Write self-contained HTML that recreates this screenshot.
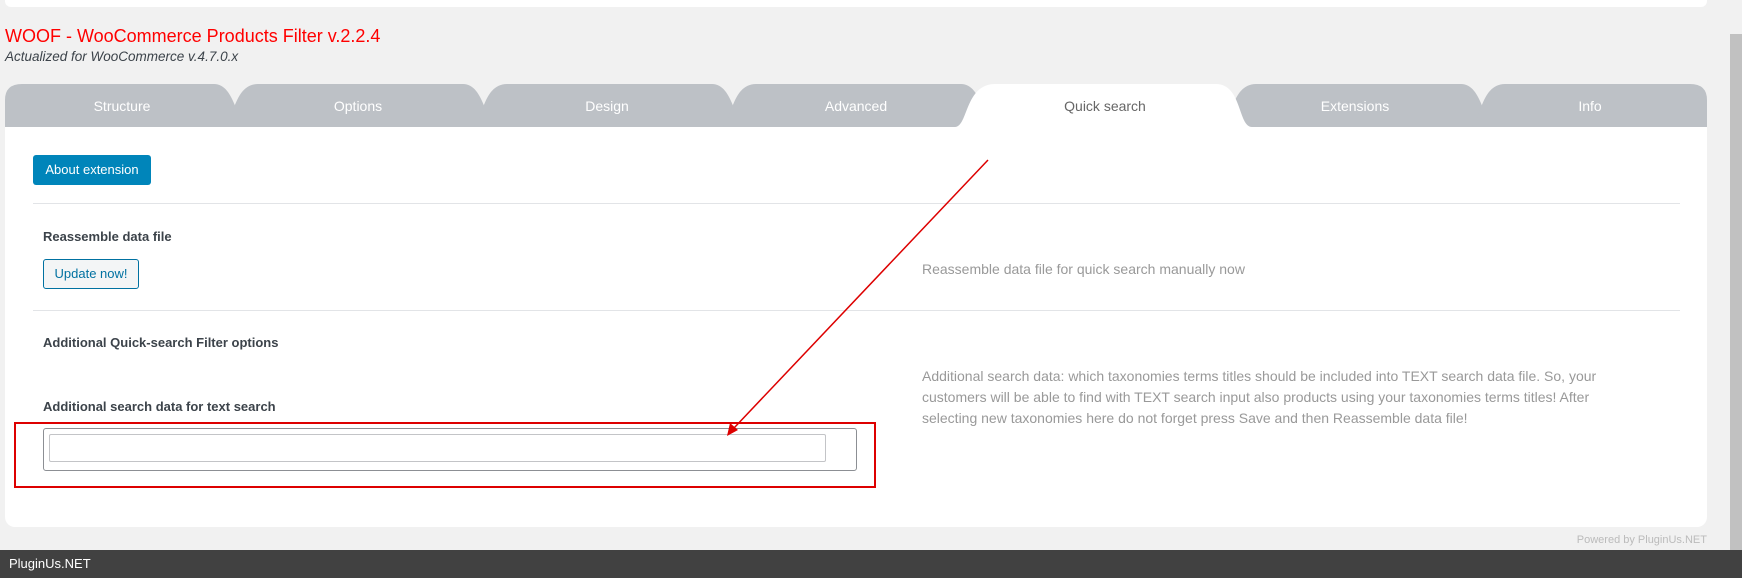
<!DOCTYPE html>
<html><head><meta charset="utf-8"><style>
*{box-sizing:border-box;margin:0;padding:0}
body{width:1742px;height:578px;background:#f1f1f1;font-family:"Liberation Sans",sans-serif;position:relative;overflow:hidden}
.a{position:absolute}
.t{font-size:14px;color:#3c434a}
</style></head><body>
<div class="a" style="left:5px;top:0;width:1702px;height:7px;background:#fff;border-radius:0 0 6px 6px"></div>
<div class="a" style="left:1730px;top:34px;width:12px;height:516px;background:#c1c1c1"></div>
<div class="a" style="left:5px;top:26px;font-size:18px;color:#f00">WOOF - WooCommerce Products Filter v.2.2.4</div>
<div class="a" style="left:5px;top:49px;font-size:13.5px;font-style:italic;color:#3c434a">Actualized for WooCommerce v.4.7.0.x</div>
<div class="a" style="left:5px;top:126px;width:1702px;height:401px;background:#fff;border-radius:0 0 10px 10px"></div>
<svg class="a" style="left:0;top:0" width="1742" height="130">
<g fill="#bdc1c6">
<path d="M5,127 L5,100 Q5,84 22,84 L214,84 C236,84 236,127 250,127 Z"/>
<path d="M222,127 C234,127 232,84 258,84 L463,84 C485,84 485,127 499,127 Z"/>
<path d="M471,127 C483,127 481,84 507,84 L712,84 C734,84 734,127 748,127 Z"/>
<path d="M720,127 C732,127 730,84 756,84 L961,84 C983,84 983,127 997,127 Z"/>
<path d="M1220,127 C1232,127 1230,84 1256,84 L1461,84 C1483,84 1483,127 1497,127 Z"/>
<path d="M1469,127 C1481,127 1479,84 1505,84 L1690,84 Q1707,84 1707,100 L1707,127 Z"/>
</g>
<path fill="#fff" d="M955,127 C968,127 965,84 995,84 L1216,84 C1242,84 1238,127 1252,127 Z"/>
<g font-family="Liberation Sans,sans-serif" font-size="14" text-anchor="middle" fill="#fff">
<text x="122" y="111">Structure</text><text x="358" y="111">Options</text><text x="607" y="111">Design</text><text x="856" y="111">Advanced</text>
<text x="1105" y="111" fill="#666">Quick search</text><text x="1355" y="111">Extensions</text><text x="1590" y="111">Info</text>
</g></svg>
<div class="a" style="left:33px;top:155px;width:118px;height:30px;background:#0085ba;border-radius:3px;color:#fff;font-size:13px;line-height:30px;text-align:center">About extension</div>
<div class="a" style="left:33px;top:203px;width:1647px;height:1px;background:#e2e4e7"></div>
<div class="a t" style="left:43px;top:229px;font-weight:bold;font-size:13px">Reassemble data file</div>
<div class="a" style="left:43px;top:259px;width:96px;height:30px;border:1px solid #0071a1;border-radius:3px;background:#f3f5f6;color:#0071a1;font-size:13px;line-height:28px;text-align:center">Update now!</div>
<div class="a" style="left:922px;top:261px;font-size:14px;color:#999">Reassemble data file for quick search manually now</div>
<div class="a" style="left:33px;top:310px;width:1647px;height:1px;background:#e2e4e7"></div>
<div class="a t" style="left:43px;top:335px;font-weight:bold;font-size:13px">Additional Quick-search Filter options</div>
<div class="a t" style="left:43px;top:399px;font-weight:bold;font-size:13px">Additional search data for text search</div>
<div class="a" style="left:922px;top:366px;width:720px;font-size:14px;line-height:21px;color:#999">Additional search data: which taxonomies terms titles should be included into TEXT search data file. So, your customers will be able to find with TEXT search input also products using your taxonomies terms titles! After selecting new taxonomies here do not forget press Save and then Reassemble data file!</div>
<div class="a" style="left:43px;top:428px;width:814px;height:43px;border:1px solid #8c8f94;border-radius:3px"></div>
<div class="a" style="left:49px;top:434px;width:777px;height:28px;border:1px solid #c3c4c7;border-radius:2px"></div>
<div class="a" style="left:14px;top:422px;width:862px;height:66px;border:2px solid #d00"></div>
<svg class="a" style="left:0;top:0" width="1742" height="578">
<line x1="988" y1="160" x2="734" y2="428" stroke="#d00" stroke-width="1.5"/>
<path d="M727,436 L730,423 L738,430 Z" fill="#d00"/>
</svg>
<div class="a" style="right:35px;top:534px;font-size:11px;color:#bbb">Powered by PluginUs.NET</div>
<div class="a" style="left:0;top:550px;width:1742px;height:28px;background:#414141;color:#fff;font-size:13px;line-height:28px;padding-left:9px">PluginUs.NET</div>
</body></html>
